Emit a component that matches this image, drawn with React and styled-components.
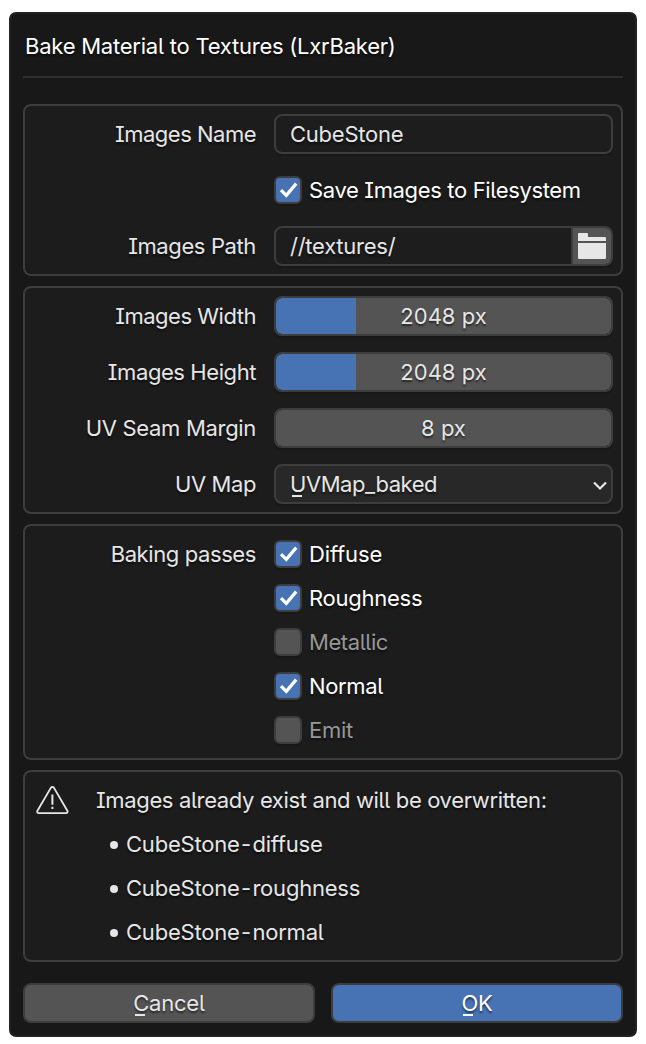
import React from "react";
import styled, { createGlobalStyle } from "styled-components";

const GlobalStyle = createGlobalStyle`
  * { box-sizing: border-box; }
  body {
    margin: 0;
    background: #fff;
    font-family: Inter, "Liberation Sans", sans-serif;
    font-size: 22px;
    line-height: 28px;
    color: #e6e6e6;
    font-feature-settings: "cv05", "cv08", "calt" 0;
    -webkit-font-smoothing: antialiased;
  }
`;

const Dialog = styled.main`
  width: 628px;
  height: 1025px;
  margin: 12px 0 0 9px;
  padding: 0 12px;
  background: #181818;
  border: 2px solid #222;
  border-radius: 7px;
  white-space: nowrap;
  text-shadow: 0 2px 2px rgba(0, 0, 0, 0.55);
`;

const Title = styled.h1`
  height: 64px;
  margin: 0 0 26px;
  padding: 18px 2px 0;
  border-bottom: 2px solid #2e2e2e;
  font-size: 22px;
  font-weight: 400;
  line-height: 28px;
  letter-spacing: -0.23px;
  color: #fff;
`;

const Panel = styled.section`
  display: flex;
  flex-direction: column;
  gap: 16px;
  height: ${(p) => p.$height}px;
  margin-bottom: 10px;
  padding: ${(p) => p.$pad || "8px"};
  background: #1c1c1c;
  border: 2px solid #3d3d3d;
  border-radius: 8px;
`;

const Row = styled.div`
  display: grid;
  grid-template-columns: 223px 339px;
  column-gap: 18px;
  align-items: center;
  height: 40px;
`;

const PassRow = styled(Row)`
  height: 44px;
`;

const Label = styled.span`
  text-align: right;
  letter-spacing: ${(p) => p.$track || 0}px;
`;

const Words = styled.span`
  letter-spacing: ${(p) => p.$track || 0}px;
`;

const Field = styled.div`
  display: flex;
  align-items: center;
  height: 40px;
  padding-left: 14px;
  overflow: hidden;
  background: ${(p) => p.$bg || "#1d1d1d"};
  border: 2px solid #3d3d3d;
  border-radius: 8px;
  box-shadow: 0 2px 0 #181818;
`;

const FolderButton = styled.span`
  display: flex;
  align-items: center;
  justify-content: center;
  width: 40px;
  height: 36px;
  margin-left: auto;
  background: #545454;
  border-left: 2px solid #3d3d3d;
`;

const Slider = styled(Field)`
  justify-content: center;
  padding: 0;
  background: linear-gradient(to right, #4772b3 ${(p) => p.$fill}px, #545454 ${(p) => p.$fill}px) padding-box;
`;

const Chevron = styled.svg`
  margin: 3px 4px 0 auto;
`;

const CheckLine = styled.div`
  display: flex;
  align-items: center;
  gap: 7px;
  color: ${(p) => (p.$on ? "#fff" : "#979797")};
`;

const Box = styled.span`
  display: flex;
  width: 28px;
  height: 28px;
  background: ${(p) => (p.$on ? "#4772b3" : "#545454")};
  border: 2px solid #3d3d3d;
  border-radius: 6px;
  box-shadow: 0 2px 0 #181818;
`;

const Warning = styled.div`
  display: grid;
  grid-template-columns: 36px 1fr;
  column-gap: 25px;
  align-items: center;
  flex-shrink: 0;
  height: 40px;
`;

const Files = styled.ul`
  margin: -14px 0 0;
  padding: 0 0 0 75px;
  list-style: none;
`;

const File = styled.li`
  display: flex;
  align-items: center;
  height: 44px;
  letter-spacing: -0.22px;
  &::before {
    content: "";
    width: 8px;
    height: 8px;
    margin: 2px 8px 0 0;
    border-radius: 50%;
    background: #e6e6e6;
  }
`;

const Hyphen = styled.span`
  padding: 0 1.5px 0 1.5px;
`;

const Actions = styled.footer`
  display: grid;
  grid-template-columns: 1fr 1fr;
  gap: 16px;
  margin-top: 21px;
`;

const Button = styled.button`
  height: 40px;
  padding: 0;
  font: inherit;
  font-feature-settings: inherit;
  text-shadow: inherit;
  letter-spacing: -0.2px;
  color: ${(p) => (p.$primary ? "#fff" : "#e6e6e6")};
  background: ${(p) => (p.$primary ? "#4772b3" : "#545454")};
  border: 2px solid #3d3d3d;
  border-radius: 8px;
`;

const Key = styled.span`
  background: linear-gradient(currentColor, currentColor) 2px 24px / 10px 2px no-repeat;
`;

function Check({ on, children, track }) {
  return (
    <CheckLine $on={on}>
      <Box $on={on}>
        {on && (
          <svg width="24" height="24" viewBox="0 0 24 24" fill="none">
            <path d="M5 12.2 10.3 17.3 20.2 5.6" stroke="#fff" strokeWidth="3.2" />
          </svg>
        )}
      </Box>
      <Words $track={track}>{children}</Words>
    </CheckLine>
  );
}

const passes = [
  { name: "Diffuse", on: true, track: -0.14 },
  { name: "Roughness", on: true, track: -0.25 },
  { name: "Metallic", on: false, track: -0.42 },
  { name: "Normal", on: true, track: -0.36 },
  { name: "Emit", on: false, track: -0.25 },
];

const files = ["diffuse", "roughness", "normal"];

export default function App() {
  return (
    <>
      <GlobalStyle />
      <Dialog>
        <Title>Bake Material to Textures (LxrBaker)</Title>

        <Panel $height={172}>
          <Row>
            <Label $track={-0.5}>Images Name</Label>
            <Field>
              <Words $track={-0.25}>CubeStone</Words>
            </Field>
          </Row>
          <Row>
            <span />
            <Check on track={-0.35}>
              Save Images to Filesystem
            </Check>
          </Row>
          <Row>
            <Label $track={-0.38}>Images Path</Label>
            <Field>
              <Words $track={-0.25}>//textures/</Words>
              <FolderButton>
                <svg width="28" height="26" viewBox="0 0 28 26" fill="#e6e6e6">
                  <path d="M1 0h8q1 0 1 1v3h17q1 0 1 1v3H0V1q0-1 1-1zM0 10h28v15q0 1-1 1H1q-1 0-1-1z" />
                </svg>
              </FolderButton>
            </Field>
          </Row>
        </Panel>

        <Panel $height={228}>
          <Row>
            <Label $track={-0.47}>Images Width</Label>
            <Slider $fill={80}>2048 px</Slider>
          </Row>
          <Row>
            <Label $track={-0.42}>Images Height</Label>
            <Slider $fill={80}>2048 px</Slider>
          </Row>
          <Row>
            <Label $track={-0.32}>UV Seam Margin</Label>
            <Slider $fill={0}>8 px</Slider>
          </Row>
          <Row>
            <Label $track={-0.4}>UV Map</Label>
            <Field $bg="#282828">
              <Words $track={-0.44}>
                <Key>U</Key>VMap_baked
              </Words>
              <Chevron width="14" height="10" viewBox="0 0 14 10" fill="none">
                <path d="M1 1.5 7 7.5 13 1.5" stroke="#e6e6e6" strokeWidth="2.2" />
              </Chevron>
            </Field>
          </Row>
        </Panel>

        <Panel $height={236} $pad="6px 8px">
          <div>
            {passes.map((p, i) => (
              <PassRow key={p.name}>
                <Label $track={-0.4}>{i === 0 ? "Baking passes" : ""}</Label>
                <Check on={p.on} track={p.track}>
                  {p.name}
                </Check>
              </PassRow>
            ))}
          </div>
        </Panel>

        <Panel $height={192} $pad="8px 10px 0">
          <Warning>
            <svg width="36" height="34" viewBox="0 0 36 34" fill="none" stroke="#e6e6e6">
              <path
                d="M15.8 4.900 2.600 27.500Q1.200 30.200 4.200 30.200H30.600Q33.600 30.200 32.200 27.500L19 4.900Q17.400 2.700 15.800 4.900Z"
                strokeWidth="1.800"
              />
              <path d="M17.400 11.600v10.200M17.400 23.700v2.400" strokeWidth="2" />
            </svg>
            <Words $track={-0.36}>Images already exist and will be overwritten:</Words>
          </Warning>
          <Files>
            {files.map((f) => (
              <File key={f}>
                CubeStone<Hyphen>-</Hyphen>
                {f}
              </File>
            ))}
          </Files>
        </Panel>

        <Actions>
          <Button>
            <Key>C</Key>ancel
          </Button>
          <Button $primary>
            <Key>O</Key>K
          </Button>
        </Actions>
      </Dialog>
    </>
  );
}
